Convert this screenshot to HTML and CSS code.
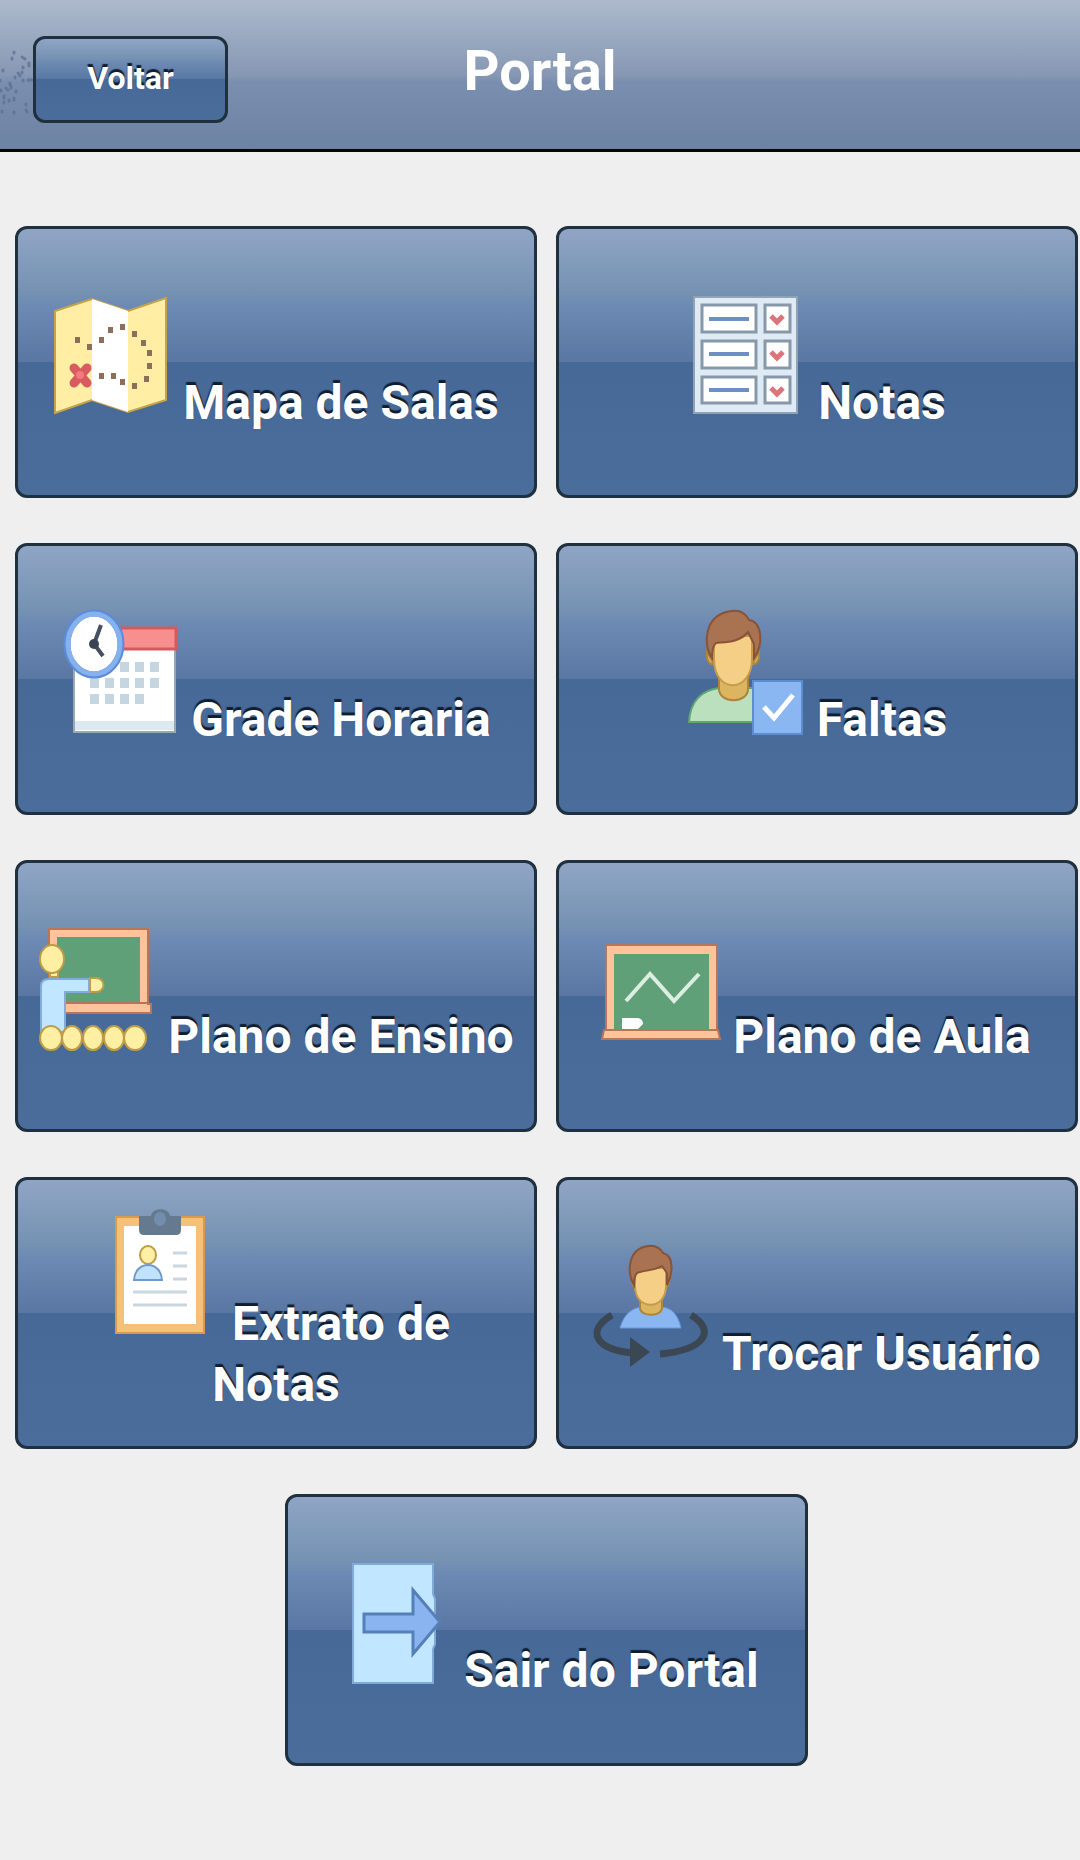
FILE: index.html
```html
<!DOCTYPE html>
<html lang="pt-BR">
<head>
<meta charset="utf-8">
<meta name="viewport" content="width=device-width, initial-scale=1">
<title>Portal</title>
<link rel="stylesheet" href="styles.css">
</head>
<body>
<header class="topbar">
  <svg class="topbar-dust" viewBox="0 0 34 70" aria-hidden="true"><path fill="none" stroke="#5a7092" stroke-opacity=".75" stroke-width="3" stroke-linecap="round" d="M14 4v1M12 10v1M22 9l3 2M29 15v3M23 19v1M3 22v1M18 25l2 3M15 29v1M28 32h4M23 32v1M10 35v2M6 40l2 2M1 42v1M11 38v2M16 43v1M4 48v2M9 52v1M4 54v1M14 50v2M22 24v1M26 56v1M2 63v1M14 64v1M26 62l1 2M0 32v1"/></svg>
  <button type="button" class="glossy back">Voltar</button>
  <h1 class="title">Portal</h1>
</header>
<main class="menu">
  <button type="button" class="glossy tile"><svg class="icon" viewBox="0 0 118 128" aria-hidden="true">
    <path fill="#ffeea3" stroke="#c4a34c" stroke-width="2" d="M2 20L39 8l36 12 38-13v102l-38 12-36-12-37 13z"/>
    <path fill="#fff" d="M39 8l36 12v101l-36-12z"/>
    <path fill="#8b6f5b" d="M22 46h5v6h-5zM34 53h5v6h-5zM46 46h5v6h-5zM55 36h5v6h-5zM67 33h5v6h-5zM79 40h5v6h-5zM88 49h5v6h-5zM94 59h5v6h-5zM94 72h5v6h-5zM91 85h5v6h-5zM79 92h5v6h-5zM67 88h5v6h-5zM58 82h5v6h-5zM46 82h5v6h-5z"/>
    <path fill="none" stroke="#d95b60" stroke-width="9" stroke-linecap="round" d="M21 77l13 15M34 77L21 92"/><circle cx="27" cy="84" r="4" fill="#f3797e"/>
  </svg> Mapa de Salas</button>
  <button type="button" class="glossy tile"><svg class="icon" viewBox="0 0 118 128" aria-hidden="true">
    <path fill="#dfebf4" stroke="#90a3b6" stroke-width="2" d="M6 6h103v116H6z"/>
    <g fill="#fff" stroke="#8799a8" stroke-width="3"><path d="M14 14h54v27H14zM77 14h25v27H77zM14 50h54v27H14zM77 50h25v27H77zM14 86h54v26H14zM77 86h25v26H77z"/></g>
    <path fill="none" stroke="#6c8fc4" stroke-width="4" d="M21 28h40M21 63h40M21 99h40"/>
    <path fill="none" stroke="#dc747a" stroke-width="5" d="M83 25l6 6 6-6M83 61l6 6 6-6M83 97l6 6 6-6"/>
  </svg> Notas</button>
  <button type="button" class="glossy tile"><svg class="icon" viewBox="0 0 118 128" aria-hidden="true">
    <path fill="#fff" stroke="#9aa7b5" stroke-width="2" d="M13 22h101v102H13z"/>
    <path fill="#dde9f1" d="M14 113h99v9H14z"/>
    <path fill="#f78f8f" stroke="#d55a5f" stroke-width="3" d="M53 20h62v21H53z"/>
    <path fill="#c5d6e1" d="M59 54h9v10h-9zM74 54h9v10h-9zM89 54h9v10h-9zM29 70h9v10h-9zM44 70h9v10h-9zM59 70h9v10h-9zM74 70h9v10h-9zM89 70h9v10h-9zM29 86h9v10h-9zM44 86h9v10h-9zM59 86h9v10h-9zM74 86h9v10h-9z"/>
    <ellipse cx="33" cy="36" rx="27" ry="31" fill="#fff" stroke="#5c8cd8" stroke-width="7"/>
    <ellipse cx="33" cy="36" rx="26" ry="30" fill="none" stroke="#85b1ee" stroke-width="5"/>
    <path fill="none" stroke="#455061" stroke-width="4" d="M40 17l-7 19 9 12"/><circle cx="33" cy="36" r="5" fill="#3b4552"/>
  </svg> Grade Horaria</button>
  <button type="button" class="glossy tile"><svg class="icon" viewBox="0 0 118 128" aria-hidden="true">
    <path fill="#bae0bd" stroke="#61a476" stroke-width="2" d="M2 114c1-21 13-32 30-34h34v34z"/>
    <path fill="#dbb560" stroke="#ad843c" stroke-width="2" d="M32 68v13c0 15 29 15 29 0V68zM20 44c-1 8 2 13 7 12zM72 44c1 8-2 13-7 12z"/>
    <path fill="#f5cf85" stroke="#c79b4d" stroke-width="2" d="M27 28h38v23c0 34-38 36-38 0z"/>
    <path fill="#a97250" stroke="#885338" stroke-width="2" d="M25 50c-9-12-9-44 20-47 8-1 14 3 17 9 13 2 15 24 5 38V36l-6-12c-9 11-23 10-32 11q-4 3-4 15z"/>
    <path fill="#8ab7f1" stroke="#5e8cd0" stroke-width="2" d="M66 73h49v53H66z"/>
    <path fill="none" stroke="#fff" stroke-width="5" d="M77 99l10 11 19-23"/>
  </svg> Faltas</button>
  <button type="button" class="glossy tile"><svg class="icon" viewBox="0 0 118 128" aria-hidden="true">
    <path fill="#ffc39b" stroke="#b77657" stroke-width="2" d="M11 4h99v75h3v9H20V79h-9z"/>
    <path fill="#60a078" d="M19 12h83v66H19z"/><path fill="none" stroke="#b77657" stroke-width="2" d="M26 78h84"/>
    <path fill="#fff0a5" stroke="#bd9c46" stroke-width="2" d="M52 53h6c10 0 10 14 0 14h-6z"/>
    <path fill="#c1e6ff" stroke="#82abd8" stroke-width="2" d="M3 107V61q0-7 8-7h40v13H27v40z"/>
    <g fill="#ffefa3" stroke="#bd9c46" stroke-width="2"><path d="M12 46h8v6h-8z"/><ellipse cx="14" cy="34" rx="12" ry="14"/><ellipse cx="13" cy="113" rx="11" ry="12"/><ellipse cx="34" cy="113" rx="10" ry="12"/><ellipse cx="55" cy="113" rx="10" ry="12"/><ellipse cx="76" cy="113" rx="10" ry="12"/><ellipse cx="97" cy="113" rx="11" ry="12"/></g>
  </svg> Plano de Ensino</button>
  <button type="button" class="glossy tile"><svg class="icon" viewBox="0 0 118 128" aria-hidden="true">
    <path fill="#ffc39b" stroke="#b77657" stroke-width="2" d="M3 20h111v85H3z"/>
    <path fill="#60a078" d="M11 29h95v75H11z"/>
    <path fill="none" stroke="#dceee2" stroke-width="4" d="M23 76l24-27 24 27 25-27"/>
    <path fill="#fff" d="M19 93h16q5 1 5 6l-5 5H19z"/>
    <path fill="#ffc39b" stroke="#b77657" stroke-width="2" d="M1 105h114l2 9H-1z"/>
  </svg> Plano de Aula</button>
  <button type="button" class="glossy tile"><svg class="icon" viewBox="0 0 118 128" aria-hidden="true">
    <path fill="#f5c077" stroke="#d89b4c" stroke-width="2" d="M14 5h88v116H14z"/><path fill="#fff" d="M22 14h72v98H22z"/>
    <path fill="#65798f" d="M37 4h12c1-9 18-9 19 0h11v14q0 5-5 5H42q-5 0-5-5z"/><ellipse cx="58" cy="7" rx="6" ry="7" fill="#728dae"/>
    <ellipse cx="46" cy="43" rx="8" ry="9" fill="#fff0a5" stroke="#bd9c46" stroke-width="2"/>
    <path fill="#bfe2ff" stroke="#7199c9" stroke-width="2" d="M32 68c1-20 27-20 28 0z"/>
    <path fill="none" stroke="#cad7e0" stroke-width="3" d="M71 41h14M71 54h14M71 67h14M31 80h54M31 93h54"/>
  </svg> Extrato de<br>Notas</button>
  <button type="button" class="glossy tile"><svg class="icon" viewBox="0 0 118 128" aria-hidden="true">
    <path fill="none" stroke="#3c4754" stroke-width="7" d="M19 73C-8 89 3 108 40 111M98 73c26 16 13 35-31 39"/><path fill="#3c4754" d="M37 95l20 15-20 15z"/>
    <path fill="#8ab7f1" stroke="#6597dc" stroke-width="1" d="M27 86c4-14 12-21 24-21h16c12 0 18 8 21 21z"/>
    <path fill="#dbb560" stroke="#ad843c" stroke-width="2" d="M47 53v13c0 9 22 9 22 0V53zM39 36c-1 6 1 9 4 9zM76 36c1 6-1 9-4 9z"/>
    <path fill="#f5cf85" stroke="#c79b4d" stroke-width="2" d="M42 26h31v18c0 25-31 25-31 0z"/>
    <path fill="#a97250" stroke="#885338" stroke-width="2" d="M41 43c-7-12-7-36 14-39 7-1 12 2 15 7 10 2 11 18 4 32V31l-5-7c-8 5-18 4-25 7q-3 3-3 12z"/>
  </svg> Trocar Usuário</button>
  <button type="button" class="glossy tile tile-center"><svg class="icon" viewBox="0 0 118 128" aria-hidden="true">
    <path fill="#c1e6ff" stroke="#80aad8" stroke-width="2" d="M19 5h80v30l2 5v45l-2 5v34H19z"/>
    <path fill="#8ab4ef" stroke="#557fb7" stroke-width="3" d="M30 55h49V31l27 32-27 32V73H30z"/>
  </svg> Sair do Portal</button>
</main>
</body>
</html>
```
FILE: styles.css
```css
* {
  box-sizing: border-box;
}

body {
  margin: 0;
  background: #efefef;
  color: #fff;
  font-family: Roboto, "Liberation Sans", sans-serif;
}

.topbar {
  position: relative;
  display: grid;
  grid-template-columns: 1fr auto 1fr;
  align-items: start;
  padding: 36px 33px 26px;
  border-bottom: 3px solid #050709;
  background: linear-gradient(#adbacd, #8798b4 50%, #7a8faf 55%, #6d83a3);
}

.topbar-dust {
  position: absolute;
  left: 0;
  top: 48px;
  width: 34px;
  height: 70px;
}

.glossy {
  border: 3px solid #1f303e;
  border-radius: 12px;
  background: linear-gradient(#90a5c6, #7592b2 24%, #6c8ab4 29%, #5a77a3 50%, #476998 50%, #4a6d9c);
  color: #fff;
  font-family: inherit;
  font-weight: 700;
  text-align: center;
  text-shadow: 0 -3px 1px #101d2f;
  cursor: pointer;
}

.back {
  position: relative;
  justify-self: start;
  width: 195px;
  height: 87px;
  padding: 0 0 4px;
  font-size: 32px;
  line-height: 40px;
}

.title {
  margin: 0;
  font-size: 56px;
  font-weight: 700;
  line-height: 70px;
}

.menu {
  display: grid;
  grid-template-columns: 1fr 1fr;
  gap: 45px 19px;
  padding: 74px 2px 96px 15px;
}

.tile {
  min-height: 272px;
  padding: 0;
  font-size: 48px;
  line-height: 61px;
}

.tile-center {
  grid-column: 1 / -1;
  justify-self: center;
  width: calc(50% - 9px);
}

.icon {
  width: 118px;
  height: 128px;
  overflow: visible;
}
```
